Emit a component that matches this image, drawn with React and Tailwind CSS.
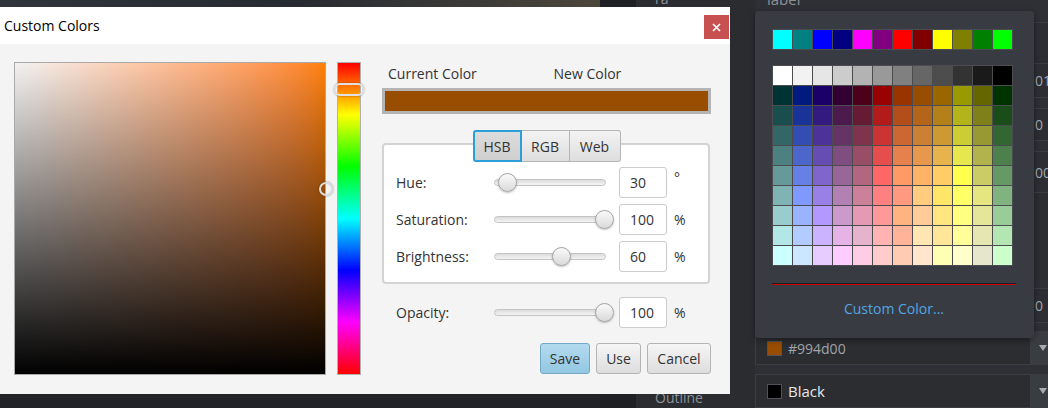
import React from 'react';

const TOP_ROW = ['#00ffff', '#008080', '#0000ff', '#000080', '#ff00ff', '#800080', '#ff0000', '#800000', '#ffff00', '#808000', '#008000', '#00ff00'];

const PALETTE = [
    ['#ffffff', '#f2f2f2', '#e6e6e6', '#cccccc', '#b3b3b3', '#999999', '#808080', '#666666', '#4d4d4d', '#333333', '#1a1a1a', '#000000'],
    ['#003333', '#001a80', '#1a0068', '#330033', '#4d001a', '#990000', '#993300', '#994d00', '#996600', '#999900', '#666600', '#003300'],
    ['#1a4d4d', '#1a3399', '#331a80', '#4d1a4d', '#661a33', '#b31a1a', '#b34d1a', '#b3661a', '#b3801a', '#b3b31a', '#80801a', '#1a4d1a'],
    ['#336666', '#334db3', '#4d3399', '#663366', '#80334d', '#cc3333', '#cc6633', '#cc8033', '#cc9933', '#cccc33', '#999933', '#336633'],
    ['#4d8080', '#4d66cc', '#664db3', '#804d80', '#994d66', '#e64d4d', '#e6804d', '#e6994d', '#e6b34d', '#e6e64d', '#b3b34d', '#4d804d'],
    ['#669999', '#6680e6', '#8066cc', '#996699', '#b36680', '#ff6666', '#ff9966', '#ffb366', '#ffcc66', '#ffff4d', '#cccc66', '#669966'],
    ['#80b3b3', '#8099ff', '#9980e6', '#b380b3', '#cc8099', '#ff8080', '#ff9980', '#ffcc80', '#ffe666', '#ffff66', '#e6e680', '#80b380'],
    ['#99cccc', '#99b3ff', '#b399ff', '#cc99cc', '#e699b3', '#ff9999', '#ffb380', '#ffcc99', '#ffe680', '#ffff80', '#e6e699', '#99cc99'],
    ['#b3e6e6', '#b3ccff', '#ccb3ff', '#e6b3e6', '#e6b3cc', '#ffb3b3', '#ffb399', '#ffe6b3', '#ffe699', '#ffff99', '#e6e6b3', '#b3e6b3'],
    ['#ccffff', '#cce6ff', '#e6ccff', '#ffccff', '#ffcce6', '#ffcccc', '#ffccb3', '#ffe6cc', '#ffffb3', '#ffffcc', '#e6e6cc', '#ccffcc'],
];

const HSB_ROWS = [
    { label: 'Hue:', value: '30', unit: '°', thumb: 4 },
    { label: 'Saturation:', value: '100', unit: '%', thumb: 101 },
    { label: 'Brightness:', value: '60', unit: '%', thumb: 58 },
];

function Slider({ thumb }) {
    return (
        <div className="relative w-[112px] h-[31px] flex items-center">
            <div className="w-full h-[7px] rounded-full border border-[#c4c4c4] bg-linear-to-b from-[#dcdcdc] to-[#f4f4f4]" />
            <div
                className="absolute top-[6px] w-[19px] h-[19px] rounded-full border border-[#a4a4a4] bg-linear-to-b from-[#fafafa] to-[#dadada] shadow-[0_1px_2px_rgba(0,0,0,0.25)]"
                style={{ left: thumb }}
            />
        </div>
    );
}

function ValueRow({ label, value, unit, thumb }) {
    return (
        <div className="flex items-center h-[31px]">
            <span className="w-[98px]">{label}</span>
            <Slider thumb={thumb} />
            <div className="ml-[13px] w-[48px] h-[31px] flex items-center pl-[10px] bg-white border border-[#cbcbcb] rounded-[3px]">
                {value}
            </div>
            <span className={`ml-[7px] ${unit === '°' ? '-mt-[10px]' : ''}`}>{unit}</span>
        </div>
    );
}

function Button({ children, primary, width }) {
    return (
        <button
            className={`h-[31px] ${width} rounded-[3px] border text-[14px] ${
                primary
                    ? 'border-[#73a9c7] bg-linear-to-b from-[#b3dbef] to-[#93c7e2]'
                    : 'border-[#b4b4b4] bg-linear-to-b from-[#f6f6f6] to-[#dddddd]'
            } text-[#333]`}
        >
            {children}
        </button>
    );
}

function CustomColorsDialog() {
    return (
        <div className="absolute left-0 top-[7px] w-[730px] h-[387px] bg-[#f4f4f4] flex flex-col font-['Open_Sans',sans-serif] text-[14px] text-[#333]">
            <div className="h-[37px] bg-white flex justify-between">
                <span className="pl-[4px] pt-[8px] text-[14px] text-black">Custom Colors</span>
                <button className="mt-[8px] mr-[1px] w-[25px] h-[24px] bg-[#c75050] flex items-center justify-center">
                    <svg width="9" height="9" viewBox="0 0 9 9">
                        <path d="M1 1 L8 8 M8 1 L1 8" stroke="white" strokeWidth="1.7" />
                    </svg>
                </button>
            </div>

            <div className="flex pl-[14px] pt-[18px]">
                {/* saturation / brightness square */}
                <div className="relative w-[312px] h-[313px] border border-[#a9a9a9] bg-linear-to-r from-[#f2f2f2] to-[#ff8000]">
                    <div className="absolute inset-0 bg-linear-to-b from-transparent to-black" />
                    <div className="absolute left-[304px] top-[119px] w-[14px] h-[14px] rounded-full border-2 border-[#dcdcdc] shadow-[0_0_2px_rgba(0,0,0,0.5)]" />
                </div>

                {/* hue bar */}
                <div className="relative ml-[11px] w-[24px] h-[313px] border border-[#b0b0b0] bg-[linear-gradient(to_bottom,#ff0000,#ffff00,#00ff00,#00ffff,#0000ff,#ff00ff,#ff0000)]">
                    <div className="absolute -left-[4px] top-[20px] w-[30px] h-[13px] rounded-[6px] border-2 border-[#e0e0e0] shadow-[0_0_2px_rgba(0,0,0,0.45)]" />
                </div>

                <div className="ml-[21px] w-[329px] flex flex-col">
                    <div className="grid grid-cols-2 h-[22px] items-center">
                        <span className="pl-[6px]">Current Color</span>
                        <span className="pl-[7px]">New Color</span>
                    </div>
                    <div className="mt-[4px] h-[26px] border-[3px] border-[#b4b4b4] bg-[#994d00]" />

                    <div className="mt-[16px] -mb-[19px] relative z-10 flex justify-center">
                        <div className="flex h-[32px]">
                            <div className="w-[49px] flex items-center justify-center rounded-l-[3px] border-2 border-[#2d9fd8] bg-linear-to-b from-[#dcdcdc] to-[#cfcfcf]">HSB</div>
                            <div className="w-[48px] flex items-center justify-center border border-l-0 border-[#b5b5b5] bg-linear-to-b from-[#f3f3f3] to-[#dedede]">RGB</div>
                            <div className="w-[51px] flex items-center justify-center rounded-r-[3px] border border-l-0 border-[#b5b5b5] bg-linear-to-b from-[#f3f3f3] to-[#dedede]">Web</div>
                        </div>
                    </div>

                    <div className="w-[328px] border-2 border-[#d3d3d3] rounded-[4px] bg-white pt-[22px] pb-[10px] pl-[12px] flex flex-col gap-[6px]">
                        {HSB_ROWS.map((row) => (
                            <ValueRow key={row.label} {...row} />
                        ))}
                    </div>

                    <div className="mt-[13px] pl-[14px]">
                        <ValueRow label="Opacity:" value="100" unit="%" thumb={101} />
                    </div>

                    <div className="mt-[15px] flex justify-end gap-[6px]">
                        <Button primary width="w-[50px]">Save</Button>
                        <Button width="w-[45px]">Use</Button>
                        <Button width="w-[64px]">Cancel</Button>
                    </div>
                </div>
            </div>
        </div>
    );
}

function PalettePopup() {
    return (
        <div className="absolute left-[755px] top-[11px] w-[279px] h-[327px] rounded-[4px] bg-[#383b42] shadow-[0_2px_6px_rgba(0,0,0,0.4)] pl-[17px] pt-[18px] font-['Open_Sans',sans-serif]">
            <div className="grid grid-cols-12 gap-[1px] p-[1px] bg-[#4a4c50] w-fit">
                {TOP_ROW.map((c) => (
                    <div key={c} className="w-[19px] h-[19px]" style={{ backgroundColor: c }} />
                ))}
            </div>
            <div className="mt-[15px] grid grid-cols-12 gap-[1px] p-[1px] bg-[#4c4c4e] w-fit">
                {PALETTE.flat().map((c, i) => (
                    <div key={i} className="w-[19px] h-[19px]" style={{ backgroundColor: c }} />
                ))}
            </div>
            <div className="mt-[17px] w-[244px] h-[2px] border-t border-[#1e1f22] bg-[#cc0000]" />
            <div className="mt-[14px] w-[244px] text-center text-[14px] leading-[20px] text-[#52a6e4]">Custom Color...</div>
        </div>
    );
}

function FieldStrip({ text, className }) {
    return (
        <div className={`border-y border-[#3a3d42] bg-[#2c2e33] flex items-center pl-[280px] text-[14px] text-[#a3a8ae] whitespace-nowrap overflow-hidden ${className}`}>
            {text}
        </div>
    );
}

function Combo({ swatch, text, textClass, className }) {
    return (
        <div className={`flex ${className}`}>
            <div className="flex-1 flex items-center border border-[#3b3d42] bg-[#2b2d31] pl-[11px]">
                <div className="w-[15px] h-[15px] border border-[#505257]" style={{ backgroundColor: swatch }} />
                <span className={`ml-[6px] ${textClass}`}>{text}</span>
            </div>
            <div className="w-[17px] bg-[#393c41] flex items-center justify-end pr-[1px]">
                <svg width="8" height="6" viewBox="0 0 8 6">
                    <path d="M0 0 H8 L4 6 Z" fill="#a8acb2" />
                </svg>
            </div>
        </div>
    );
}

export default function App() {
    return (
        <div className="relative w-[1048px] h-[408px] overflow-hidden flex bg-[#222327] font-['Open_Sans',sans-serif]">
            {/* background application */}
            <div className="w-[600px] shrink-0 flex flex-col">
                <div className="h-[7px] bg-linear-to-r from-[#30353b] via-[#262b31] to-[#4d463b]" />
                <div className="flex-1 bg-[#222327]" />
            </div>
            <div className="w-[36px] shrink-0 bg-[#1f2023]" />
            <div className="w-[119px] shrink-0 bg-[#2a2c30] flex flex-col justify-between text-[14px] text-[#8d9197] pl-[19px]">
                <span className="-mt-[12px]">ra</span>
                <span className="mb-[0px]">Outline</span>
            </div>
            <div className="flex-1 min-w-0 bg-[#2e3035] flex flex-col">
                <div className="h-[14px] overflow-hidden pl-[12px] text-[15px] text-[#8d9197]">
                    <span className="block -mt-[12px]">label</span>
                </div>
                <div className="h-[10px] shrink-0" />
                <FieldStrip text="" className="h-[42px] shrink-0" />
                <FieldStrip text="01" className="h-[34px] shrink-0 border-t-0" />
                <div className="h-[10px] shrink-0" />
                <FieldStrip text="0" className="h-[33px] shrink-0" />
                <div className="h-[10px] shrink-0" />
                <FieldStrip text="00(" className="h-[42px] shrink-0" />
                <div className="h-[87px] shrink-0 bg-[#2b2d31]" />
                <div className="h-[8px] shrink-0" />
                <FieldStrip text="0" className="h-[35px] shrink-0" />
                <div className="h-[8px] shrink-0" />
                <Combo swatch="#994d00" text="#994d00" textClass="text-[14px] text-[#a1a5ab]" className="h-[34px] shrink-0" />
                <div className="h-[9px] shrink-0" />
                <Combo swatch="#000000" text="Black" textClass="text-[15px] text-[#e6e7e9]" className="h-[34px] shrink-0" />
            </div>

            <CustomColorsDialog />
            <PalettePopup />
        </div>
    );
}
